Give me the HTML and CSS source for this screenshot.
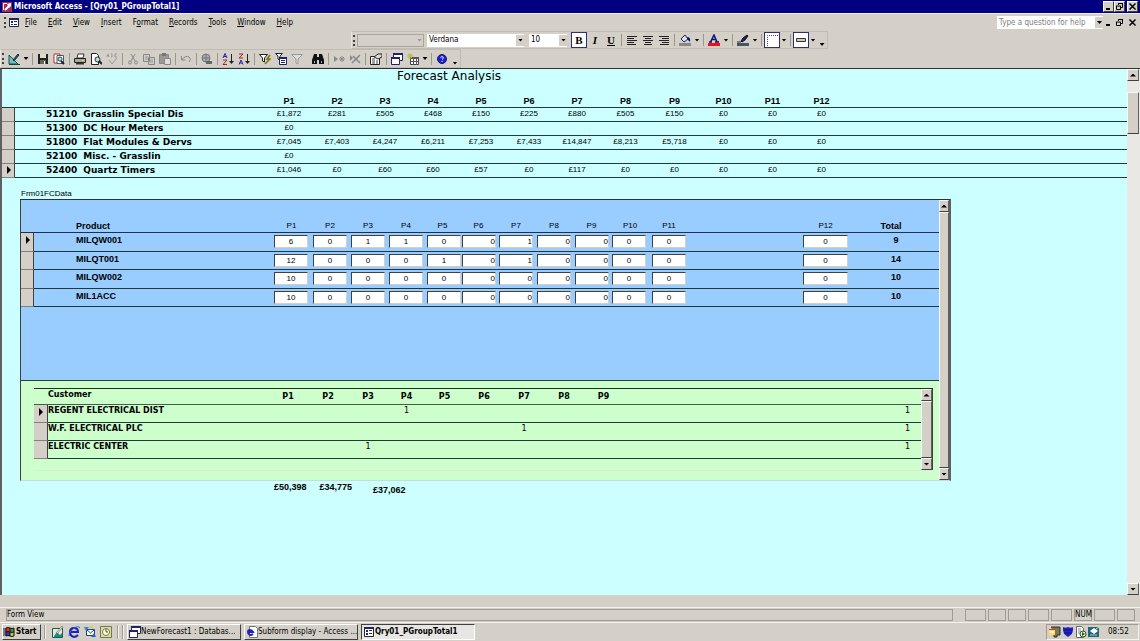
FILE: index.html
```
<!DOCTYPE html>
<html lang="en">
<head>
    <meta charset="UTF-8">
    <meta name="viewport" content="width=device-width, initial-scale=1.0">
    <title>Microsoft Access - [Qry01_PGroupTotal1]</title>
    <link rel="stylesheet" href="styles.css">
</head>
<body>
    <header class="titlebar">
        <svg class="icon" viewBox="0 0 12 12"><path fill="#a03050" d="M1 1h10v10H1z"/><path fill="#fff" d="M2 2h4v1H3v6H2zM6 3l4-1v3L8 7z"/><path d="M4 9l4-4" stroke="#fff" stroke-width="2"/></svg>
        <h1>Microsoft Access - [Qry01_PGroupTotal1]</h1>
        <div class="window-buttons">
            <button aria-label="Minimize"><svg viewBox="0 0 9 9"><path d="M2 7h4" stroke="#000" stroke-width="2"/></svg></button>
            <button aria-label="Restore"><svg viewBox="0 0 9 9"><path d="M3 1.5h5M3.5 1v2M7.5 1v4.5H6M1 4h5M1.5 4v3.5h4V4" fill="none" stroke="#000"/></svg></button>
            <button class="close" aria-label="Close"><svg viewBox="0 0 9 9"><path d="M1.5 1.5l6 6M7.5 1.5l-6 6" stroke="#000" stroke-width="1.5"/></svg></button>
        </div>
    </header>

    <nav class="menubar">
        <span class="grip"></span>
        <svg class="icon" viewBox="0 0 12 12"><path fill="#fff" stroke="#224" d="M1.5 1.5h9v8h-9z"/><path fill="#226" d="M1 1h10v2H1zM3 4h2v2H3zM6 4h3v1H6zM3 7h2v1H3zM6 7h3v1H6z"/></svg>
        <ul>
            <li><u>F</u>ile</li>
            <li><u>E</u>dit</li>
            <li><u>V</u>iew</li>
            <li><u>I</u>nsert</li>
            <li>F<u>o</u>rmat</li>
            <li><u>R</u>ecords</li>
            <li><u>T</u>ools</li>
            <li><u>W</u>indow</li>
            <li><u>H</u>elp</li>
        </ul>
        <div class="combo question">
            <input type="text" placeholder="Type a question for help" aria-label="Type a question for help">
            <span class="arrow"></span>
        </div>
        <div class="window-buttons flat">
            <button aria-label="Minimize form"><svg viewBox="0 0 9 9"><path d="M2 7h4" stroke="#000" stroke-width="2"/></svg></button>
            <button aria-label="Restore form"><svg viewBox="0 0 9 9"><path d="M3 1.5h5M3.5 1v2M7.5 1v4.5H6M1 4h5M1.5 4v3.5h4V4" fill="none" stroke="#000"/></svg></button>
            <button class="close" aria-label="Close form"><svg viewBox="0 0 9 9"><path d="M1.5 1.5l6 6M7.5 1.5l-6 6" stroke="#000" stroke-width="1.5"/></svg></button>
        </div>
    </nav>

    <div class="toolbar formatting">
        <span class="grip"></span>
        <div class="combo object">
            <select aria-label="Object" disabled><option></option></select>
            <span class="arrow"></span>
        </div>
        <div class="combo font">
            <select aria-label="Font"><option>Verdana</option></select>
            <span class="arrow"></span>
        </div>
        <div class="combo size">
            <select aria-label="Font size"><option>10</option></select>
            <span class="arrow"></span>
        </div>
        <button class="letter on"><b>B</b></button>
        <button class="letter"><i>I</i></button>
        <button class="letter"><u>U</u></button>
        <span class="sep"></span>
        <button aria-label="Align left"><svg viewBox="0 0 12 12"><path d="M1 2.5h10M1 4.5h7M1 6.5h10M1 8.5h7M1 10.5h9" stroke="#222"/></svg></button>
        <button aria-label="Center"><svg viewBox="0 0 12 12"><path d="M1 2.5h10M3 4.5h6M1 6.5h10M3 8.5h6M2 10.5h8" stroke="#222"/></svg></button>
        <button aria-label="Align right"><svg viewBox="0 0 12 12"><path d="M1 2.5h10M4 4.5h7M1 6.5h10M4 8.5h7M2 10.5h9" stroke="#222"/></svg></button>
        <span class="sep"></span>
        <button aria-label="Fill color"><svg viewBox="0 0 12 12"><path d="M2 5l4-4 3 4-4 3z" fill="#dde" stroke="#225"/><path d="M8 3q4 0 3 5L9 6z" fill="#117"/><path d="M0 9h12v3H0z" fill="#888"/></svg></button>
        <button class="drop" aria-label="Fill colors"><span class="arrow"></span></button>
        <span class="sep"></span>
        <button aria-label="Font color"><svg viewBox="0 0 12 12"><path d="M2.5 8L6 1l3 7M4 5.5h4M1 8h3M7 8h4" fill="none" stroke="#117" stroke-width="1.5"/><path d="M0 9h12v3H0z" fill="#e11"/></svg></button>
        <button class="drop" aria-label="Font colors"><span class="arrow"></span></button>
        <span class="sep"></span>
        <button aria-label="Line color"><svg viewBox="0 0 12 12"><path d="M4 7l2-3 4-3 1 1-3 4-3 2z" fill="#225" stroke="#112"/><path d="M0 8h4" stroke="#222"/><path d="M0 9h12v3H0z" fill="#456"/></svg></button>
        <button class="drop" aria-label="Line colors"><span class="arrow"></span></button>
        <span class="sep"></span>
        <button class="on" aria-label="Border width"><svg viewBox="0 0 12 12"><path d="M1.5 12V1.5H12" fill="none" stroke="#447" stroke-dasharray="1 1"/></svg></button>
        <button class="drop" aria-label="Border widths"><span class="arrow"></span></button>
        <span class="sep"></span>
        <button class="on" aria-label="Special effect"><svg viewBox="0 0 12 12"><path d="M1.5 4.5h9v3h-9z" fill="#ccc" stroke="#333"/></svg></button>
        <button class="drop" aria-label="Special effects"><span class="arrow"></span></button>
        <button class="more" aria-label="Formatting options"><span class="arrow"></span></button>
    </div>

    <div class="toolbar standard">
        <span class="grip"></span>
        <button aria-label="View"><svg viewBox="0 0 12 12"><path d="M1 2v9h9z" fill="#7bb" stroke="#155"/><path d="M5 7l5-6 1 1-5 6z" fill="#257" stroke="#134"/><path d="M1 11.5h11" stroke="#143"/></svg></button>
        <button class="drop" aria-label="Views"><span class="arrow"></span></button>
        <span class="sep"></span>
        <button aria-label="Save"><svg viewBox="0 0 12 12"><path d="M1 1h10v10H1z" fill="#222"/><path d="M3 1h6v4H3z" fill="#ddc"/><path d="M3 7h6v4H3z" fill="#665"/><path d="M7 8h1v3H7z" fill="#fff"/></svg></button>
        <button aria-label="Search"><svg viewBox="0 0 12 12"><path d="M1 1h6v9H1z" fill="#fff" stroke="#a33"/><path d="M4 2.5h6.5v8H4z" fill="#fff" stroke="#555"/><circle cx="7" cy="6" r="2" fill="#bdf" stroke="#246"/><path d="M8 8l3 3" stroke="#222" stroke-width="2"/></svg></button>
        <span class="sep"></span>
        <button aria-label="Print"><svg viewBox="0 0 12 12"><path d="M3 5l1-4h6L9 5z" fill="#fff" stroke="#333"/><path d="M.5 5.5h11v4H.5z" fill="#aa9" stroke="#222"/><path d="M2 10h8v1.5H2z" fill="#333"/><path d="M8 7h2v1H8z" fill="#dd3"/></svg></button>
        <button aria-label="Print preview"><svg viewBox="0 0 12 12"><path d="M1.5.5h5l2 2v9h-7z" fill="#fff" stroke="#222"/><circle cx="7.500" cy="6.500" r="2.500" fill="#bdd" stroke="#233"/><path d="M9 8l3 3" stroke="#222" stroke-width="2"/></svg></button>
        <button aria-label="Spelling" disabled><svg viewBox="0 0 12 12"><path d="M1 4l1-3 1 3M5 1h1v3H5M11 1H9v3h2M3 7l3 4 5-6" fill="none" stroke="#999"/></svg></button>
        <span class="sep"></span>
        <button aria-label="Cut" disabled><svg viewBox="0 0 12 12"><path d="M4 1l4 7M8 1L4 8" stroke="#888"/><circle cx="3" cy="9.5" r="1.5" fill="none" stroke="#888"/><circle cx="9" cy="9.5" r="1.5" fill="none" stroke="#888"/></svg></button>
        <button aria-label="Copy" disabled><svg viewBox="0 0 12 12"><path d="M.5 1.5h6v7h-6zM5.5 4.5h6v7h-6z" fill="#ccc" stroke="#888"/><path d="M2 4h3M2 6h3M7 7h3M7 9h3" stroke="#999"/></svg></button>
        <button aria-label="Paste" disabled><svg viewBox="0 0 12 12"><path d="M.5 1.5h9v9h-9z" fill="#999" stroke="#888"/><path d="M3 0h4v3H3z" fill="#777"/><path d="M5.5 5.5h6v6h-6z" fill="#ddd" stroke="#888"/></svg></button>
        <span class="sep"></span>
        <button aria-label="Undo" disabled><svg viewBox="0 0 12 12"><path d="M1.5 3v4h4M2 6.5Q6 2 9 4t0 5" fill="none" stroke="#888"/></svg></button>
        <span class="sep"></span>
        <button aria-label="Insert hyperlink" disabled><svg viewBox="0 0 12 12"><circle cx="5" cy="5" r="4" fill="#aaa" stroke="#777"/><path d="M1 5h8M5 1v8" stroke="#777"/><path d="M5 9.5h6" stroke="#666" stroke-width="3"/></svg></button>
        <span class="sep"></span>
        <button aria-label="Sort ascending"><svg viewBox="0 0 12 12"><path d="M1 5l2-4.5L5 5M2 3.5h2" fill="none" stroke="#22a"/><path d="M1 7h4l-4 4.5h4" fill="none" stroke="#a22"/><path d="M9.5 1v9" stroke="#222"/><path d="M7 8h5l-2.5 3z" fill="#222"/></svg></button>
        <button aria-label="Sort descending"><svg viewBox="0 0 12 12"><path d="M1 1h4L1 5h4" fill="none" stroke="#a22"/><path d="M1 11.5L3 7l2 4.5M2 10h2" fill="none" stroke="#22a"/><path d="M9.5 1v9" stroke="#222"/><path d="M7 8h5l-2.5 3z" fill="#222"/></svg></button>
        <span class="sep"></span>
        <button aria-label="Filter by selection"><svg viewBox="0 0 12 12"><path d="M.5 1.5h8L5.5 5v4l-2-1V5z" fill="#fff" stroke="#222"/><path d="M11 2L8 6h3l-5 5" fill="none" stroke="#771" stroke-width="1.5"/></svg></button>
        <button aria-label="Filter by form"><svg viewBox="0 0 12 12"><path d="M.5.5h7L5 3v4l-2-1V3z" fill="#fff" stroke="#222"/><path d="M4.5 4.5h7v7h-7z" fill="#fff" stroke="#226"/><path d="M4 4h8v2H4zM6 7h4v1H6zM6 9h4v1H6z" fill="#226"/></svg></button>
        <button aria-label="Apply filter" disabled><svg viewBox="0 0 12 12"><path d="M.5 1.5h11L7 6v5L5 10V6z" fill="#ddd" stroke="#999"/></svg></button>
        <span class="sep blank"></span>
        <button aria-label="Find"><svg viewBox="0 0 12 12"><path d="M2 1h3v3h2V1h3l2 6v4H7V7H5v4H0V7z" fill="#111"/><path d="M2 8h1v2H2zM9 8h1v2H9z" fill="#aaa"/></svg></button>
        <span class="sep"></span>
        <button aria-label="New record" disabled><svg viewBox="0 0 12 12"><path d="M1 3l4 3-4 3z" fill="#888"/><path d="M9 3v6M6 6h6M7 4l4 4M11 4L7 8" stroke="#888"/></svg></button>
        <button aria-label="Delete record" disabled><svg viewBox="0 0 12 12"><path d="M1 2l3 3-3 3z" fill="#888"/><path d="M3 10l8-8M4 3l7 7" stroke="#888" stroke-width="1.5"/></svg></button>
        <span class="sep"></span>
        <button aria-label="Properties"><svg viewBox="0 0 12 12"><path d="M.5 3.5h9v8h-9z" fill="#fff" stroke="#222"/><path d="M2 6h3M2 8h3M2 10h3M6 8h2M6 10h2" stroke="#444"/><path d="M4 4l4-3h4v3L8 6z" fill="#ddd" stroke="#222"/></svg></button>
        <span class="sep"></span>
        <button aria-label="Database window"><svg viewBox="0 0 12 12"><path d="M2.5.5h9v7h-9z" fill="#fff" stroke="#226"/><path d="M2 0h10v2H2z" fill="#226"/><path d="M.5 4.5h8v7h-8z" fill="#fff" stroke="#226"/><path d="M0 4h9v2H0z" fill="#226"/></svg></button>
        <button aria-label="New object"><svg viewBox="0 0 12 12"><path d="M3.5 4.5h8v7h-8z" fill="#fff" stroke="#444"/><path d="M3 4h9v2H3zM6 6h1v6H6zM9 6h1v6H9zM3 8h9v1H3z" fill="#555"/><path d="M3 0v6M0 3h6M1 1l4 4M5 1L1 5" stroke="#bb3"/></svg></button>
        <button class="drop" aria-label="New objects"><span class="arrow"></span></button>
        <span class="sep"></span>
        <button aria-label="Help"><svg viewBox="0 0 12 12"><circle cx="6" cy="6" r="4.5" fill="#22c" stroke="#117"/><path d="M4.5 4.5q1.5-2 3 0 0 1-1.5 2M6 8v1" fill="none" stroke="#fff"/></svg></button>
        <button class="more" aria-label="Toolbar options"><span class="arrow"></span></button>
    </div>

    <main class="workspace">
        <section class="form">
            <h2>Forecast Analysis</h2>
            <table class="groups">
                <colgroup>
                    <col class="selector"><col class="name">
                    <col span="7" class="period"><col span="5" class="period-wide">
                    <col>
                </colgroup>
                <thead>
                    <tr><th></th><th></th><th>P1</th><th>P2</th><th>P3</th><th>P4</th><th>P5</th><th>P6</th><th>P7</th><th>P8</th><th>P9</th><th>P10</th><th>P11</th><th>P12</th><th></th></tr>
                </thead>
                <tbody>
                    <tr><td class="selector"></td><th><span>51210</span>Grasslin Special Dis</th><td>£1,872</td><td>£281</td><td>£505</td><td>£468</td><td>£150</td><td>£225</td><td>£880</td><td>£505</td><td>£150</td><td>£0</td><td>£0</td><td>£0</td><td></td></tr>
                    <tr><td class="selector"></td><th><span>51300</span>DC Hour Meters</th><td>£0</td><td></td><td></td><td></td><td></td><td></td><td></td><td></td><td></td><td></td><td></td><td></td><td></td></tr>
                    <tr><td class="selector"></td><th><span>51800</span>Flat Modules &amp; Dervs</th><td>£7,045</td><td>£7,403</td><td>£4,247</td><td>£6,211</td><td>£7,253</td><td>£7,433</td><td>£14,847</td><td>£8,213</td><td>£5,718</td><td>£0</td><td>£0</td><td>£0</td><td></td></tr>
                    <tr><td class="selector"></td><th><span>52100</span>Misc. - Grasslin</th><td>£0</td><td></td><td></td><td></td><td></td><td></td><td></td><td></td><td></td><td></td><td></td><td></td><td></td></tr>
                    <tr><td class="selector current"></td><th><span>52400</span>Quartz Timers</th><td>£1,046</td><td>£0</td><td>£60</td><td>£60</td><td>£57</td><td>£0</td><td>£117</td><td>£0</td><td>£0</td><td>£0</td><td>£0</td><td>£0</td><td></td></tr>
                </tbody>
            </table>

            <h3>Frm01FCData</h3>
            <div class="subform">
                <div class="subform-body">
                    <div class="products-area">
                        <table class="products">
                            <colgroup>
                                <col class="selector"><col class="product">
                                <col class="q1"><col span="3" class="q2"><col class="q5"><col class="q6"><col span="2" class="q2"><col class="q6"><col class="q10"><col class="q2">
                                <col class="gap"><col class="q12"><col>
                            </colgroup>
                            <thead>
                                <tr><th></th><th class="name">Product</th><th>P1</th><th>P2</th><th>P3</th><th>P4</th><th>P5</th><th>P6</th><th>P7</th><th>P8</th><th>P9</th><th>P10</th><th>P11</th><th></th><th>P12</th><th class="total">Total</th></tr>
                            </thead>
                            <tbody>
                                <tr>
                                    <td class="selector current"></td><th>MILQW001</th>
                                    <td><input value="6" aria-label="MILQW001 P1"></td>
                                    <td><input value="0" aria-label="MILQW001 P2"></td>
                                    <td><input value="1" aria-label="MILQW001 P3"></td>
                                    <td><input value="1" aria-label="MILQW001 P4"></td>
                                    <td><input value="0" aria-label="MILQW001 P5"></td>
                                    <td><input class="right" value="0" aria-label="MILQW001 P6"></td>
                                    <td><input class="right" value="1" aria-label="MILQW001 P7"></td>
                                    <td><input class="right" value="0" aria-label="MILQW001 P8"></td>
                                    <td><input class="right" value="0" aria-label="MILQW001 P9"></td>
                                    <td><input value="0" aria-label="MILQW001 P10"></td>
                                    <td><input value="0" aria-label="MILQW001 P11"></td>
                                    <td></td>
                                    <td><input class="wide" value="0" aria-label="MILQW001 P12"></td>
                                    <td class="total">9</td>
                                </tr>
                                <tr>
                                    <td class="selector"></td><th>MILQT001</th>
                                    <td><input value="12" aria-label="MILQT001 P1"></td>
                                    <td><input value="0" aria-label="MILQT001 P2"></td>
                                    <td><input value="0" aria-label="MILQT001 P3"></td>
                                    <td><input value="0" aria-label="MILQT001 P4"></td>
                                    <td><input value="1" aria-label="MILQT001 P5"></td>
                                    <td><input class="right" value="0" aria-label="MILQT001 P6"></td>
                                    <td><input class="right" value="1" aria-label="MILQT001 P7"></td>
                                    <td><input class="right" value="0" aria-label="MILQT001 P8"></td>
                                    <td><input class="right" value="0" aria-label="MILQT001 P9"></td>
                                    <td><input value="0" aria-label="MILQT001 P10"></td>
                                    <td><input value="0" aria-label="MILQT001 P11"></td>
                                    <td></td>
                                    <td><input class="wide" value="0" aria-label="MILQT001 P12"></td>
                                    <td class="total">14</td>
                                </tr>
                                <tr>
                                    <td class="selector"></td><th>MILQW002</th>
                                    <td><input value="10" aria-label="MILQW002 P1"></td>
                                    <td><input value="0" aria-label="MILQW002 P2"></td>
                                    <td><input value="0" aria-label="MILQW002 P3"></td>
                                    <td><input value="0" aria-label="MILQW002 P4"></td>
                                    <td><input value="0" aria-label="MILQW002 P5"></td>
                                    <td><input class="right" value="0" aria-label="MILQW002 P6"></td>
                                    <td><input class="right" value="0" aria-label="MILQW002 P7"></td>
                                    <td><input class="right" value="0" aria-label="MILQW002 P8"></td>
                                    <td><input class="right" value="0" aria-label="MILQW002 P9"></td>
                                    <td><input value="0" aria-label="MILQW002 P10"></td>
                                    <td><input value="0" aria-label="MILQW002 P11"></td>
                                    <td></td>
                                    <td><input class="wide" value="0" aria-label="MILQW002 P12"></td>
                                    <td class="total">10</td>
                                </tr>
                                <tr>
                                    <td class="selector"></td><th>MIL1ACC</th>
                                    <td><input value="10" aria-label="MIL1ACC P1"></td>
                                    <td><input value="0" aria-label="MIL1ACC P2"></td>
                                    <td><input value="0" aria-label="MIL1ACC P3"></td>
                                    <td><input value="0" aria-label="MIL1ACC P4"></td>
                                    <td><input value="0" aria-label="MIL1ACC P5"></td>
                                    <td><input class="right" value="0" aria-label="MIL1ACC P6"></td>
                                    <td><input class="right" value="0" aria-label="MIL1ACC P7"></td>
                                    <td><input class="right" value="0" aria-label="MIL1ACC P8"></td>
                                    <td><input class="right" value="0" aria-label="MIL1ACC P9"></td>
                                    <td><input value="0" aria-label="MIL1ACC P10"></td>
                                    <td><input value="0" aria-label="MIL1ACC P11"></td>
                                    <td></td>
                                    <td><input class="wide" value="0" aria-label="MIL1ACC P12"></td>
                                    <td class="total">10</td>
                                </tr>
                            </tbody>
                        </table>
                    </div>
                    <div class="customers-area">
                        <div class="customers-form">
                            <table class="customers">
                                <colgroup>
                                    <col class="selector"><col class="customer">
                                    <col span="3" class="c1"><col class="c4"><col class="c5"><col span="3" class="c1"><col class="c5">
                                    <col>
                                </colgroup>
                                <thead>
                                    <tr><th></th><th class="name">Customer</th><th>P1</th><th>P2</th><th>P3</th><th>P4</th><th>P5</th><th>P6</th><th>P7</th><th>P8</th><th>P9</th><th></th></tr>
                                </thead>
                                <tbody>
                                    <tr><td class="selector current"></td><th>REGENT ELECTRICAL DIST</th><td></td><td></td><td></td><td>1</td><td></td><td></td><td></td><td></td><td></td><td class="total">1</td></tr>
                                    <tr><td class="selector"></td><th>W.F. ELECTRICAL PLC</th><td></td><td></td><td></td><td></td><td></td><td></td><td>1</td><td></td><td></td><td class="total">1</td></tr>
                                    <tr><td class="selector"></td><th>ELECTRIC CENTER</th><td></td><td></td><td>1</td><td></td><td></td><td></td><td></td><td></td><td></td><td class="total">1</td></tr>
                                </tbody>
                            </table>
                            <div class="scrollbar">
                                <button class="up" aria-label="Scroll customers up"></button>
                                <span class="thumb full"></span>
                                <button class="down" aria-label="Scroll customers down"></button>
                            </div>
                        </div>
                    </div>
                </div>
                <div class="scrollbar">
                    <button class="up" aria-label="Scroll products up"></button>
                    <span class="thumb full"></span>
                    <button class="down" aria-label="Scroll products down"></button>
                </div>
            </div>
            <div class="sums"><span>£50,398</span><span>£34,775</span><span class="low">£37,062</span></div>
        </section>
        <div class="scrollbar main-scroll">
            <button class="up" aria-label="Scroll up"></button>
            <span class="thumb"></span>
            <button class="down" aria-label="Scroll down"></button>
        </div>
    </main>

    <div class="statusbar">
        <span class="message">Form View</span>
        <span class="w22"></span><span></span><span></span><span class="w22"></span><span class="w22"></span><span>NUM</span><span class="w22"></span><span></span>
    </div>

    <footer class="taskbar">
        <button class="start">
            <svg class="icon" viewBox="0 0 12 12"><path d="M0 3h3M0 5h3M0 7h3M0 9h3" stroke="#222"/><path d="M3 2q2-1 4 0v4q-2-1-4 0z" fill="#d33"/><path d="M7 2q2 1 4 0v4q-2 1-4 0z" fill="#393"/><path d="M3 6q2-1 4 0v4q-2-1-4 0z" fill="#33c"/><path d="M7 6q2 1 4 0v4q-2 1-4 0z" fill="#cc3"/><path d="M3 2q2-1 4 0t4 0v8q-2 1-4 0t-4 0zM7 2v8M3 6q2-1 4 0t4 0" fill="none" stroke="#111"/></svg>
            Start
        </button>
        <span class="divider"></span>
        <div class="quick">
            <svg class="icon" viewBox="0 0 12 12"><path d="M.5 2.5h10v9H.5z" fill="#ded" stroke="#255"/><path d="M2 10l3-4 3 3 2-2v4H2z" fill="#288"/><path d="M4 7l6-7 1 1-6 7z" fill="#eea" stroke="#443" stroke-width=".5"/></svg>
            <svg class="icon" viewBox="0 0 12 12"><path d="M10 9q-2 2-4 2-4-1-4-5t4-4 4 4H3" fill="none" stroke="#22b" stroke-width="2"/><path d="M1 10Q0 7 5 3t7-1" fill="none" stroke="#26c"/></svg>
            <svg class="icon" viewBox="0 0 12 12"><path d="M2.5 3.5h8v6h-8z" fill="#fff" stroke="#247"/><path d="M3 4l3.5 3L10 4" fill="none" stroke="#247"/><path d="M0 1h5L2 5z" fill="#38c"/><path d="M12 11H7l3-4z" fill="#26b"/><path d="M6 0h3v2H6z" fill="#dc4"/></svg>
            <svg class="icon" viewBox="0 0 12 12"><path d="M.5.5h11v11H.5z" fill="#dda" stroke="#774"/><circle cx="6" cy="6" r="3.5" fill="#ffe" stroke="#774"/><path d="M6 3v3h2" fill="none" stroke="#552"/></svg>
        </div>
        <span class="divider"></span>
        <span class="divider"></span>
        <button class="task">
            <svg class="icon" viewBox="0 0 12 12"><path d="M2.5.5h9v7h-9z" fill="#fff" stroke="#226"/><path d="M2 0h10v2H2z" fill="#226"/><path d="M.5 4.5h8v7h-8z" fill="#fff" stroke="#226"/><path d="M0 4h9v2H0z" fill="#226"/></svg>
            <span>NewForecast1 : Databas...</span>
        </button>
        <button class="task">
            <svg class="icon" viewBox="0 0 12 12"><path d="M3.5.5h6l2 2v9h-8z" fill="#fff" stroke="#777"/><path d="M7 8q-1 1-3 1-2-1-2-3t2-2 3 2H2" fill="none" stroke="#22b" stroke-width="2"/></svg>
            <span>Subform display - Access ...</span>
        </button>
        <button class="task active">
            <svg class="icon" viewBox="0 0 12 12"><path fill="#fff" stroke="#224" d="M1.5 1.5h9v9h-9z"/><path fill="#226" d="M1 1h10v2H1zM3 4h2v2H3zM6 4h3v1H6zM3 7h2v2H3zM6 7h3v1H6z"/></svg>
            <span>Qry01_PGroupTotal1</span>
        </button>
        <div class="tray">
            <svg class="icon" viewBox="0 0 12 12"><path d="M2 1h9v8H8v2H5V9" fill="#775" stroke="#332"/><path d="M0 3h6v6H0z" fill="#fd5"/><path d="M0 3h6v1H0z" fill="#d33"/><path d="M1 5h4v2H1z" fill="#fec"/></svg>
            <svg class="icon" viewBox="0 0 12 12"><path d="M1 1q2 1 5 0 3 1 5 0 1 7-5 10Q0 8 1 1z" fill="#22c"/><path d="M2 4h8M2 7h8" stroke="#117"/></svg>
            <svg class="icon" viewBox="0 0 12 12"><path d="M1.5.5h5l2 2v9h-7z" fill="#fff" stroke="#666"/><path d="M3 3h3M3 5h3M3 7h2" stroke="#888"/><circle cx="8" cy="8" r="3" fill="#efe" stroke="#252"/><path d="M7 6l3 2-3 2z" fill="#252"/></svg>
            <svg class="icon" viewBox="0 0 12 12"><path d="M0 1h11v10H0z" fill="#267"/><path d="M2 5l4-3 4 3-4 3z" fill="#fff"/><path d="M2 9h7" stroke="#9cd"/><path d="M8 3l3-2" stroke="#ee8"/></svg>
            <time>08:52</time>
        </div>
    </footer>
</body>
</html>
```

FILE: styles.css
```
* {
    box-sizing: border-box;
}

body {
    display: flex;
    flex-direction: column;
    height: 100vh;
    margin: 0;
    overflow: hidden;
    background-color: #d4d0c8;
    color: #000;
    font-family: "DejaVu Sans Condensed", "DejaVu Sans", sans-serif;
    font-size: 8px;
    line-height: 10px;
}

h1, h2, h3, ul {
    margin: 0;
    padding: 0;
}

button, input, select {
    margin: 0;
    padding: 0;
    border: 0;
    border-radius: 0;
    outline: 0;
    appearance: none;
    background: none;
    color: inherit;
    font: inherit;
}

svg {
    display: block;
}

.icon {
    flex: none;
    width: 12px;
    height: 12px;
}

/* Title bar and menu */
.titlebar {
    display: flex;
    align-items: center;
    height: 13px;
    padding: 0 2px 0 1px;
    background-color: #000080;
    color: #fff;
}

.titlebar h1 {
    margin-left: 1px;
    font-size: 8px;
}

.window-buttons {
    display: flex;
    margin-left: auto;
}

.window-buttons button {
    width: 11px;
    height: 11px;
    border: 1px solid;
    border-color: #fff #404040 #404040 #fff;
    background-color: #d4d0c8;
}

.window-buttons .close {
    margin-left: 2px;
}

.window-buttons.flat {
    margin-left: 0;
}

.window-buttons.flat button {
    border-color: transparent;
}

.menubar {
    display: flex;
    align-items: center;
    height: 18px;
    padding: 0 2px 0 3px;
    border-top: 1px solid #f0eee8;
}

.menubar ul {
    display: flex;
    gap: 11px;
    margin-left: 5px;
    list-style: none;
}

.grip {
    width: 2px;
    height: 11px;
    margin: 0 2px 0 1px;
    border-left: 2px dotted #404040;
}

.arrow {
    flex: none;
    display: block;
    width: 5px;
    height: 3px;
    margin: 0 1px;
    background-color: #000;
    clip-path: polygon(0 0, 100% 0, 50% 100%);
}

.combo {
    display: flex;
    align-items: center;
    height: 13px;
    padding-left: 2px;
    background: linear-gradient(#d4d0c8, #d4d0c8) right / 8px 11px no-repeat #fff;
}

.combo input, .combo select {
    flex: 1;
    min-width: 0;
    opacity: 1;
}

.combo input::placeholder {
    color: #808080;
    opacity: 1;
}

.question {
    width: 106px;
    margin-left: auto;
}

/* Toolbars */
.toolbar {
    display: flex;
    align-items: center;
    align-self: flex-start;
    height: 18px;
    border: 1px solid #c0bcb4;
    border-left-color: #e8e6e0;
}

.formatting {
    margin-left: 351px;
}

.standard {
    height: 19px;
}

.toolbar button {
    display: flex;
    align-items: center;
    justify-content: center;
    width: 16px;
    height: 16px;
}

.toolbar svg {
    width: 12px;
    height: 12px;
}

.toolbar .drop {
    width: 8px;
}

.toolbar .on {
    border: 1px solid #303070;
    background-color: #fff;
}

.toolbar .letter {
    font-family: "Liberation Serif", serif;
    font-size: 11px;
    font-weight: bold;
}

.toolbar .more {
    align-items: flex-end;
    width: 10px;
    padding-bottom: 2px;
}

.sep {
    width: 1px;
    height: 12px;
    margin: 0 2px;
    background-color: #9c9890;
}

.sep.blank {
    background: none;
}

.object {
    width: 67px;
    border: 1px solid #a8a49c;
    background: none;
}

.object .arrow {
    background-color: #999;
}

.font {
    width: 97px;
    margin-left: 3px;
}

.size {
    width: 38px;
    margin: 0 4px 0 5px;
}

/* Form window */
.workspace {
    flex: 1;
    display: flex;
    min-height: 0;
    border-top: 1px solid #303030;
    border-left: 2px solid #606060;
}

.form {
    flex: 1;
    min-width: 0;
    overflow: hidden;
    background-color: #ccffff;
    font-family: "Liberation Sans", Arial, sans-serif;
}

.form h2 {
    width: 894px;
    font-family: "DejaVu Sans", sans-serif;
    font-size: 12px;
    font-weight: normal;
    line-height: 14px;
    text-align: center;
}

.form h3 {
    margin: 10px 0 0 19px;
    font-weight: normal;
    font-size: 8px;
    line-height: 11px;
}

table {
    width: 100%;
    table-layout: fixed;
    border-collapse: separate;
    border-spacing: 0;
}

th, td {
    padding: 0;
    text-align: center;
    vertical-align: top;
    white-space: nowrap;
}

tbody tr > * {
    border-bottom: 1px solid #203838;
}

tbody th {
    text-align: left;
}

col.selector {
    width: 13px;
}

td.selector {
    border-right: 1px solid #404040;
    border-bottom-color: #808080;
    background-color: #d4d0c8;
}

td.current::before {
    content: "";
    display: block;
    width: 4px;
    height: 8px;
    margin: 3px 0 0 5px;
    background-color: #000;
    clip-path: polygon(0 0, 100% 50%, 0 100%);
}

.groups .name {
    width: 250px;
}

.groups .period {
    width: 48px;
}

.groups .period-wide {
    width: 49px;
}

.groups thead th {
    height: 25px;
    border-bottom: 1px solid #203838;
    font-size: 9px;
    line-height: 12px;
    vertical-align: bottom;
}

.groups tbody tr {
    height: 14px;
}

.groups tbody th {
    padding-left: 31px;
    font-family: "DejaVu Sans", sans-serif;
    font-size: 9px;
    line-height: 13px;
}

.groups tbody span {
    margin-right: 6px;
}

.groups td {
    line-height: 11px;
}

.groups td.current::before {
    margin-top: 2px;
}

/* Product subform */
.subform {
    display: flex;
    max-width: 931px;
    margin-left: 18px;
    border: solid;
    border-width: 1px 2px 1px 1px;
    border-color: #303030 #606060 #c8dcdc #404040;
}

.subform-body {
    flex: 1;
    min-width: 0;
}

.products-area {
    min-height: 181px;
    border-bottom: 1px solid #304030;
    background-color: #99ccff;
}

.products .product {
    width: 238px;
}

.products .q1 {
    width: 39px;
}

.products .q2 {
    width: 38px;
}

.products .q5 {
    width: 35px;
}

.products .q6 {
    width: 37px;
}

.products .q10 {
    width: 40px;
}

.products .gap {
    width: 113px;
}

.products .q12 {
    width: 49px;
}

.products thead th {
    height: 33px;
    border-bottom: 1px solid #203050;
    font-weight: normal;
    line-height: 12px;
    vertical-align: bottom;
}

.products tbody tr:nth-child(odd) {
    height: 19px;
}

.products tbody tr:nth-child(even) {
    height: 18px;
}

.products tbody th, .products thead .name {
    padding-left: 42px;
    font-size: 9px;
    font-weight: bold;
    line-height: 15px;
    text-align: left;
}

.products .total {
    padding-left: 3px;
    font-size: 9px;
    font-weight: bold;
    line-height: 15px;
}

.products thead .name, .products thead .total {
    line-height: 12px;
}

.products thead .total {
    padding: 0 7px 0 0;
}

.products input {
    display: block;
    width: 34px;
    height: 13px;
    margin: 2px 0 0 2px;
    border: 1px solid;
    border-color: #404040 #d4d0c8 #d4d0c8 #404040;
    background-color: #fff;
    text-align: center;
}

.products .right {
    text-align: right;
}

.products .wide {
    width: 45px;
}

/* Customer subform */
.customers-area {
    padding: 7px 6px 9px 13px;
    background-color: #ccffcc;
    font-family: "DejaVu Sans", sans-serif;
}

.customers-form {
    display: flex;
    height: 83px;
    border-top: 1px solid #203020;
    border-bottom: 1px solid #e0e8d8;
}

.customers {
    flex: 1;
    align-self: flex-start;
}

.customers col.selector {
    width: 14px;
}

.customers .customer {
    width: 220px;
}

.customers .c1 {
    width: 40px;
}

.customers .c4 {
    width: 37px;
}

.customers .c5 {
    width: 39px;
}

.customers thead th {
    height: 16px;
    padding-top: 3px;
    border-bottom: 1px solid #406040;
}

.customers thead .name {
    padding-top: 0;
    line-height: 11px;
    text-align: left;
}

.customers tbody tr {
    height: 18px;
}

.customers tbody tr > * {
    line-height: 12px;
}

.customers .total {
    padding-right: 11px;
    text-align: right;
}

/* Scroll bars */
.scrollbar {
    flex: none;
    display: flex;
    flex-direction: column;
    width: 10px;
    background-color: #eae8e4;
}

.customers-form .scrollbar {
    width: 12px;
    border-right: 1px solid #404040;
}

.main-scroll {
    width: 13px;
    padding-right: 1px;
}

.scrollbar button, .thumb {
    flex: none;
    height: 12px;
    border: 1px solid;
    border-color: #f8f8f4 #606060 #404040 #f8f8f4;
    background-color: #d4d0c8;
}

.scrollbar button::before {
    content: "";
    display: block;
    width: 6px;
    height: 3px;
    margin: 0 auto;
    background-color: #000;
}

.up::before {
    clip-path: polygon(50% 0, 100% 100%, 0 100%);
}

.down::before {
    clip-path: polygon(0 0, 100% 0, 50% 100%);
}

.thumb {
    height: 42px;
    margin: 11px 0 auto;
}

.thumb.full {
    flex: 1;
    height: auto;
    margin: 0;
}

.sums {
    display: flex;
    gap: 13px;
    margin-left: 272px;
    font-size: 9px;
    font-weight: bold;
    line-height: 12px;
}

.sums .low {
    margin: 3px 0 0 8px;
}

/* Status bar and task bar */
.statusbar {
    display: flex;
    gap: 2px;
    margin-top: 12px;
    padding: 1px 5px 0 6px;
    border-top: 1px solid #f4f2ec;
}

.statusbar span {
    width: 18px;
    height: 12px;
    border: 1px solid;
    border-color: #a09c94;
}

.statusbar .w22 {
    width: 21px;
}

.statusbar .message {
    flex: 1;
    margin-right: 10px;
}

.taskbar {
    display: flex;
    align-items: center;
    gap: 3px;
    height: 19px;
    margin-top: 1px;
    padding: 0 1px 0 2px;
    border-top: 1px solid #f4f2ec;
}

.start, .task {
    display: flex;
    align-items: center;
    height: 16px;
    border: 1px solid;
    border-color: #fff #404040 #404040 #fff;
}

.start {
    gap: 1px;
    width: 39px;
    font-weight: bold;
}

.divider {
    width: 2px;
    height: 14px;
    border-left: 1px solid #a09c94;
    border-right: 1px solid #f4f2ec;
}

.quick {
    display: flex;
    gap: 4px;
    padding: 0 2px 0 3px;
}

.task {
    width: 114px;
    padding-left: 1px;
}

.task span {
    overflow: hidden;
    white-space: nowrap;
}

.task.active {
    border-color: #404040 #fff #fff #404040;
    background-color: #e8e6e2;
    font-weight: bold;
}

.tray {
    display: flex;
    align-items: center;
    gap: 1px;
    width: 93px;
    height: 16px;
    margin-left: auto;
    padding-left: 2px;
    border: 1px solid;
    border-color: #a09c94 #f4f2ec #f4f2ec #a09c94;
}

.tray time {
    margin-left: 7px;
}
```
